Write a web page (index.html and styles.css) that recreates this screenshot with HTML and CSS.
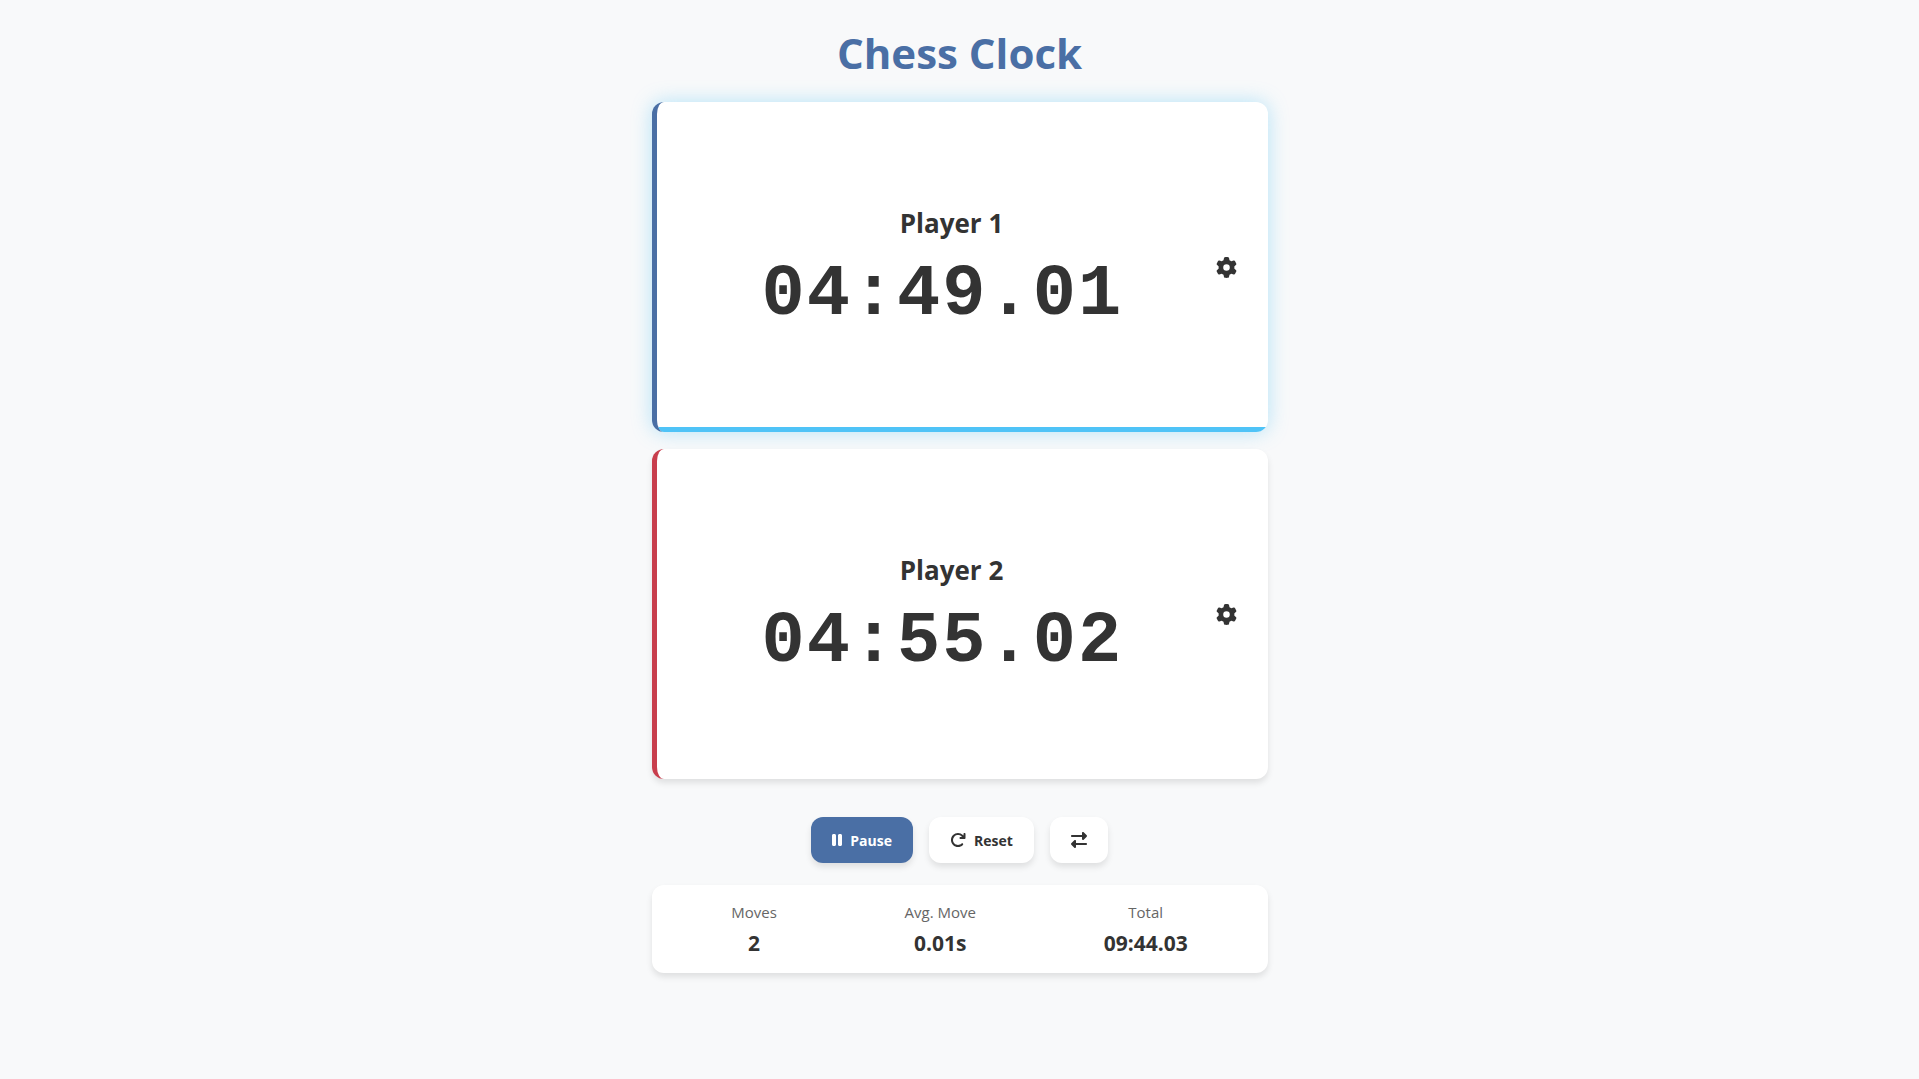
FILE: index.html
```html
<!DOCTYPE html>
<html lang="en">
<head>
    <meta charset="UTF-8">
    <meta name="viewport" content="width=device-width, initial-scale=1.0">
    <title>Chess Clock</title>
    <link rel="stylesheet" href="styles.css">
</head>
<body>
    <div class="container">
        <h1>Chess Clock</h1>

        <div class="clocks">
            <section class="player player-1 active">
                <div class="player-info">
                    <h2 class="player-name">Player 1</h2>
                    <div class="time" id="time1">04:49.01</div>
                </div>
                <button class="settings-btn" aria-label="Player 1 settings">
                    <svg class="icon icon-gear" viewBox="0 0 512 512"><path d="M495.9 166.6c3.2 8.7 .5 18.4-6.4 24.6l-43.3 39.4c1.1 8.3 1.7 16.8 1.7 25.4s-.6 17.1-1.7 25.4l43.3 39.4c6.9 6.2 9.6 15.9 6.4 24.6c-4.4 11.9-9.7 23.3-15.8 34.3l-4.7 8.1c-6.6 11-14 21.4-22.1 31.2c-5.9 7.2-15.7 9.6-24.5 6.8l-55.7-17.7c-13.4 10.3-28.2 18.9-44 25.4l-12.5 57.1c-2 9.1-9 16.3-18.2 17.8c-13.8 2.3-28 3.5-42.5 3.5s-28.7-1.2-42.5-3.5c-9.2-1.5-16.2-8.7-18.2-17.8l-12.5-57.1c-15.8-6.5-30.6-15.1-44-25.4L83.1 425.9c-8.8 2.8-18.6 .3-24.5-6.8c-8.1-9.8-15.5-20.2-22.1-31.2l-4.7-8.1c-6.1-11-11.4-22.4-15.8-34.3c-3.2-8.7-.5-18.4 6.4-24.6l43.3-39.4C64.6 273.1 64 264.6 64 256s.6-17.1 1.7-25.4L22.4 191.2c-6.9-6.2-9.6-15.9-6.4-24.6c4.4-11.9 9.7-23.3 15.8-34.3l4.7-8.1c6.6-11 14-21.4 22.1-31.2c5.9-7.2 15.7-9.6 24.5-6.8l55.7 17.7c13.4-10.3 28.2-18.9 44-25.4l12.5-57.1c2-9.1 9-16.3 18.2-17.8C227.3 1.2 241.5 0 256 0s28.7 1.2 42.5 3.5c9.2 1.5 16.2 8.7 18.2 17.8l12.5 57.1c15.8 6.5 30.6 15.1 44 25.4l55.7-17.7c8.8-2.8 18.6-.3 24.5 6.8c8.1 9.8 15.5 20.2 22.1 31.2l4.7 8.1c6.1 11 11.4 22.4 15.8 34.3zM256 336a80 80 0 1 0 0-160 80 80 0 1 0 0 160z"/></svg>
                </button>
            </section>

            <section class="player player-2">
                <div class="player-info">
                    <h2 class="player-name">Player 2</h2>
                    <div class="time" id="time2">04:55.02</div>
                </div>
                <button class="settings-btn" aria-label="Player 2 settings">
                    <svg class="icon icon-gear" viewBox="0 0 512 512"><path d="M495.9 166.6c3.2 8.7 .5 18.4-6.4 24.6l-43.3 39.4c1.1 8.3 1.7 16.8 1.7 25.4s-.6 17.1-1.7 25.4l43.3 39.4c6.9 6.2 9.6 15.9 6.4 24.6c-4.4 11.9-9.7 23.3-15.8 34.3l-4.7 8.1c-6.6 11-14 21.4-22.1 31.2c-5.9 7.2-15.7 9.6-24.5 6.8l-55.7-17.7c-13.4 10.3-28.2 18.9-44 25.4l-12.5 57.1c-2 9.1-9 16.3-18.2 17.8c-13.8 2.3-28 3.5-42.5 3.5s-28.7-1.2-42.5-3.5c-9.2-1.5-16.2-8.7-18.2-17.8l-12.5-57.1c-15.8-6.5-30.6-15.1-44-25.4L83.1 425.9c-8.8 2.8-18.6 .3-24.5-6.8c-8.1-9.8-15.5-20.2-22.1-31.2l-4.7-8.1c-6.1-11-11.4-22.4-15.8-34.3c-3.2-8.7-.5-18.4 6.4-24.6l43.3-39.4C64.6 273.1 64 264.6 64 256s.6-17.1 1.7-25.4L22.4 191.2c-6.9-6.2-9.6-15.9-6.4-24.6c4.4-11.9 9.7-23.3 15.8-34.3l4.7-8.1c6.6-11 14-21.4 22.1-31.2c5.9-7.2 15.7-9.6 24.5-6.8l55.7 17.7c13.4-10.3 28.2-18.9 44-25.4l12.5-57.1c2-9.1 9-16.3 18.2-17.8C227.3 1.2 241.5 0 256 0s28.7 1.2 42.5 3.5c9.2 1.5 16.2 8.7 18.2 17.8l12.5 57.1c15.8 6.5 30.6 15.1 44 25.4l55.7-17.7c8.8-2.8 18.6-.3 24.5 6.8c8.1 9.8 15.5 20.2 22.1 31.2l4.7 8.1c6.1 11 11.4 22.4 15.8 34.3zM256 336a80 80 0 1 0 0-160 80 80 0 1 0 0 160z"/></svg>
                </button>
            </section>
        </div>

        <div class="controls">
            <button class="btn btn-primary" id="pauseBtn">
                <svg class="icon icon-pause" viewBox="0 0 320 512"><path d="M48 64C21.5 64 0 85.5 0 112V400c0 26.5 21.5 48 48 48H80c26.5 0 48-21.5 48-48V112c0-26.5-21.5-48-48-48H48zm192 0c-26.5 0-48 21.5-48 48V400c0 26.5 21.5 48 48 48h32c26.5 0 48-21.5 48-48V112c0-26.5-21.5-48-48-48H240z"/></svg>
                Pause
            </button>
            <button class="btn" id="resetBtn">
                <svg class="icon" viewBox="0 0 512 512"><path d="M386.3 160H336c-17.7 0-32 14.3-32 32s14.3 32 32 32H464c17.7 0 32-14.3 32-32V64c0-17.7-14.3-32-32-32s-32 14.3-32 32v51.2L414.4 97.6c-87.5-87.5-229.3-87.5-316.8 0s-87.5 229.3 0 316.8s229.3 87.5 316.8 0c12.5-12.5 12.5-32.8 0-45.3s-32.8-12.5-45.3 0c-62.5 62.5-163.8 62.5-226.3 0s-62.5-163.8 0-226.3s163.8-62.5 226.3 0L386.3 160z"/></svg>
                Reset
            </button>
            <button class="btn" id="swapBtn" aria-label="Swap players">
                <svg class="icon" viewBox="0 0 512 512"><path d="M502.6 150.6l-96 96c-9.2 9.2-22.9 11.9-34.9 6.9S352 236.900 352 224V160H32c-17.700 0-32-14.300-32-32s14.300-32 32-32H352V32c0-12.900 7.800-24.600 19.800-29.600s25.700-2.200 34.900 6.900l96 96c12.500 12.500 12.500 32.800 0 45.300zm-397.300 352l-96-96c-12.500-12.500-12.500-32.800 0-45.300l96-96c9.200-9.200 22.900-11.900 34.900-6.900s19.800 16.600 19.800 29.600v64H480c17.700 0 32 14.300 32 32s-14.300 32-32 32H160v64c0 12.900-7.800 24.600-19.800 29.600s-25.700 2.200-34.900-6.900z"/></svg>
            </button>
        </div>

        <div class="stats">
            <div class="stat">
                <div class="stat-label">Moves</div>
                <div class="stat-value" id="moves">2</div>
            </div>
            <div class="stat">
                <div class="stat-label">Avg. Move</div>
                <div class="stat-value" id="avgMove">0.01s</div>
            </div>
            <div class="stat">
                <div class="stat-label">Total</div>
                <div class="stat-value" id="total">09:44.03</div>
            </div>
        </div>
    </div>
</body>
</html>
```
FILE: styles.css
```css
* {
    margin: 0;
    padding: 0;
    box-sizing: border-box;
}
body {
    font-family: "Segoe UI", "Open Sans", "Noto Sans", sans-serif;
    background-color: #f8f9fa;
    color: #333;
    min-height: 100vh;
}
.container {
    max-width: 650px;
    margin: 0 auto;
    padding: 24px 17px;
}
h1 {
    color: #4a6fa5;
    font-size: 42px;
    line-height: 58px;
    text-align: center;
    margin-bottom: 20px;
}
.clocks {
    display: flex;
    flex-direction: column;
    gap: 17px;
}
.player {
    position: relative;
    display: flex;
    align-items: center;
    min-height: 330px;
    padding: 0 21px 0 40px;
    background: white;
    border-left: 5px solid #4a6fa5;
    border-radius: 12px;
    box-shadow: 0 4px 6px rgba(0, 0, 0, 0.1);
    overflow: hidden;
}
.player-2 {
    border-left-color: #c83e4d;
}
.player.active {
    box-shadow: 0 0 20px rgba(79, 195, 247, 0.4);
}
/* bar under the player whose clock is running */
.player.active::after {
    content: "";
    position: absolute;
    left: 0;
    right: 0;
    bottom: 0;
    height: 5px;
    background: #4fc3f7;
}
.player-info {
    flex: 1;
    display: flex;
    flex-direction: column;
    align-items: center;
}
.player-name {
    font-size: 26px;
    line-height: 56px;
}
.time {
    min-width: 380px;
    font-family: "Courier New", "Liberation Mono", monospace;
    font-size: 72px;
    font-weight: bold;
    line-height: 88px;
    letter-spacing: 2px;
}
.settings-btn {
    display: flex;
    align-items: center;
    justify-content: center;
    width: 40px;
    height: 40px;
    border: none;
    background: none;
    color: #333;
    cursor: pointer;
}
.icon {
    width: 16px;
    height: 16px;
    fill: currentColor;
}
.icon-gear {
    width: 21px;
    height: 21px;
}
.icon-pause {
    width: 10px;
}
.controls {
    display: flex;
    justify-content: center;
    gap: 16px;
    margin: 38px 0 22px;
}
.btn {
    display: flex;
    align-items: center;
    gap: 8px;
    height: 46px;
    padding: 0 21px;
    border: none;
    border-radius: 12px;
    background: white;
    color: #333;
    font-family: inherit;
    font-size: 14px;
    font-weight: bold;
    box-shadow: 0 4px 6px rgba(0, 0, 0, 0.1);
    cursor: pointer;
}
.btn-primary {
    background: #4a6fa5;
    color: white;
}
.stats {
    display: flex;
    justify-content: space-around;
    padding: 16px;
    background: white;
    border-radius: 12px;
    box-shadow: 0 4px 6px rgba(0, 0, 0, 0.1);
    text-align: center;
}
.stat-label {
    font-size: 15px;
    line-height: 22px;
    color: #666;
    margin-bottom: 6px;
}
.stat-value {
    font-size: 21px;
    font-weight: bold;
    line-height: 28px;
}
```
